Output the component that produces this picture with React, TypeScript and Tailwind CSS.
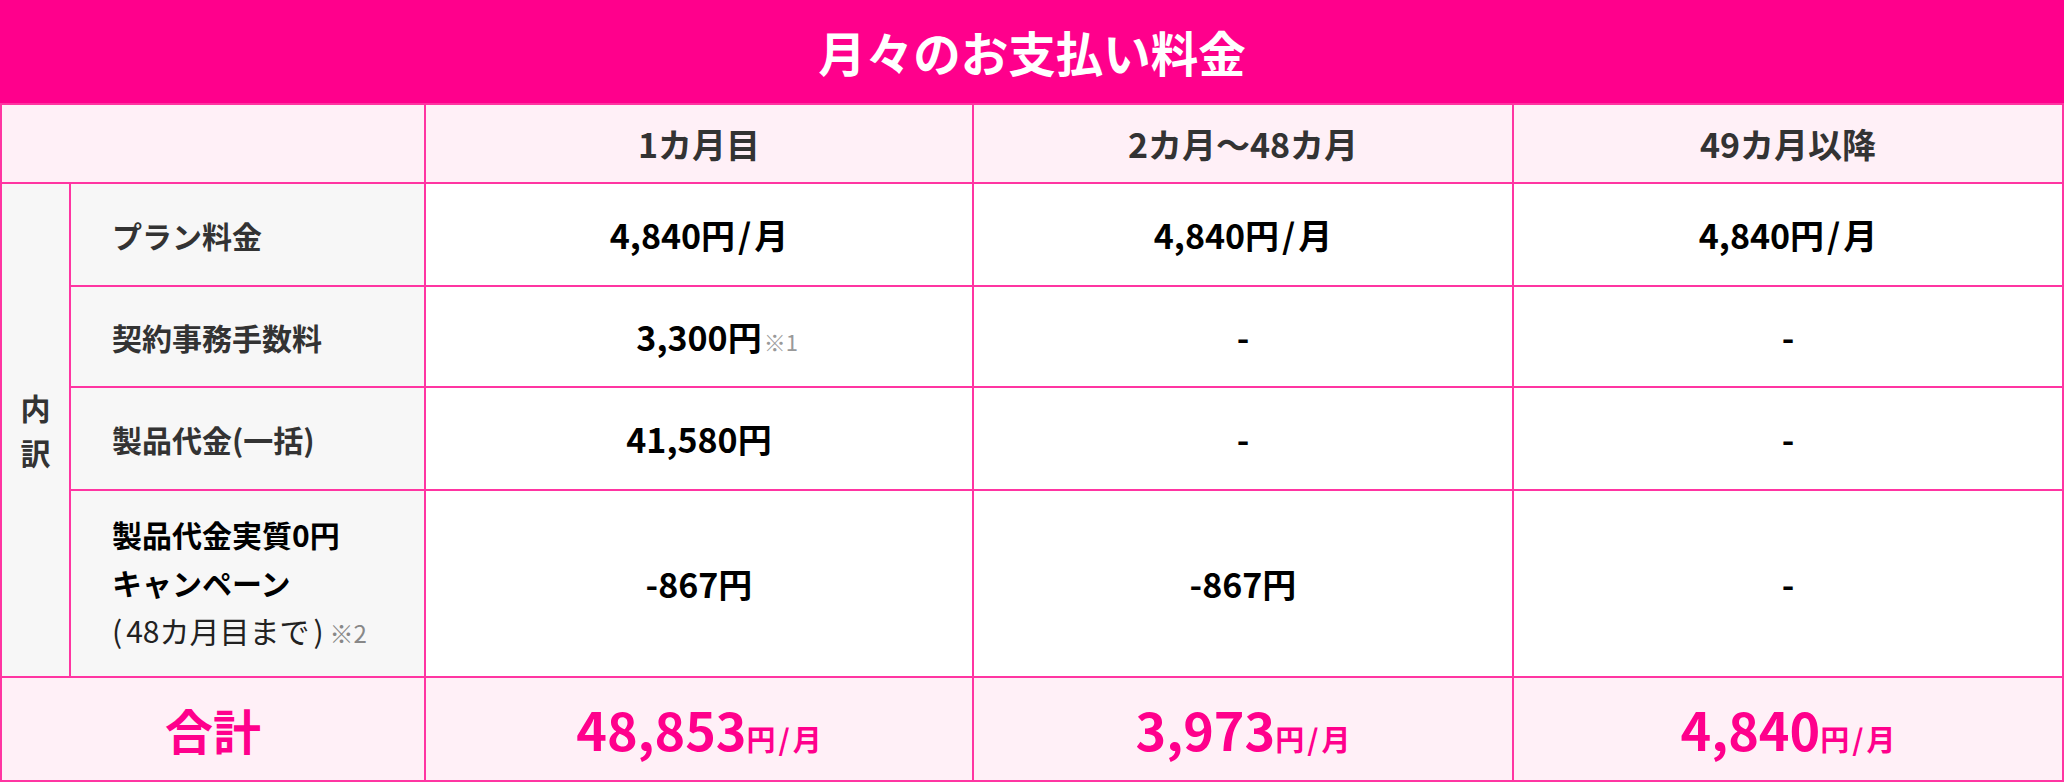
const font = "font-['Noto_Sans_CJK_JP','Noto_Sans',sans-serif]";

export default function App() {
  return (
    <div className={`w-[2064px] bg-white ${font}`}>
      <div className="flex h-[103px] items-center justify-center bg-[#ff008c]">
        <h1 className="text-[47.5px] font-bold leading-none text-white">月々のお支払い料金</h1>
      </div>

      <div className="grid grid-cols-[67px_353px_546px_538px_548px] grid-rows-[77px_101px_99px_101px_185px_102px] gap-[2px] bg-[#ff35a2] p-[2px]">
        {/* 見出し行 */}
        <div className="col-span-2 bg-[#fff0f7]" />
        <HeadCell>1カ月目</HeadCell>
        <HeadCell>2カ月〜48カ月</HeadCell>
        <HeadCell>49カ月以降</HeadCell>

        {/* 内訳 */}
        <div className="row-span-4 flex items-center justify-center bg-[#f7f7f7]">
          <div className="text-[30px] font-bold leading-[45px] text-[#333]">
            内<br />訳
          </div>
        </div>

        <Label>プラン料金</Label>
        <Value text="4,840円/月" />
        <Value text="4,840円/月" />
        <Value text="4,840円/月" />

        <Label>契約事務手数料</Label>
        <Value text="3,300円" note="※1" />
        <Value text="-" />
        <Value text="-" />

        <Label>製品代金(一括)</Label>
        <Value text="41,580円" />
        <Value text="-" />
        <Value text="-" />

        <div className="flex flex-col justify-center bg-[#f7f7f7] pl-[41px] text-[30px] leading-[48px]">
          <div className="font-bold text-black">製品代金実質0円</div>
          <div className="font-bold text-black">キャンペーン</div>
          <div className="text-[#222]">
            <span className="mr-[4px]">(</span>48カ月目まで<span className="ml-[4px]">)</span>
            <span className="ml-[6px] text-[24px] text-[#888]">※2</span>
          </div>
        </div>
        <Value text="-867円" />
        <Value text="-867円" />
        <Value text="-" />

        {/* 合計 */}
        <div className="col-span-2 flex items-center justify-center bg-[#fff0f7]">
          <span className="text-[48px] font-bold leading-none text-[#ff008c]">合計</span>
        </div>
        <Total amount="48,853" />
        <Total amount="3,973" />
        <Total amount="4,840" />
      </div>
    </div>
  );
}

function HeadCell({ children }: { children: React.ReactNode }) {
  return (
    <div className="flex items-center justify-center bg-[#fff0f7]">
      <span className="text-[34px] font-bold leading-none text-[#333]">{children}</span>
    </div>
  );
}

function Label({ children }: { children: React.ReactNode }) {
  return (
    <div className="flex items-center bg-[#f7f7f7] pl-[41px]">
      <span className="text-[30px] font-bold leading-none text-[#333]">{children}</span>
    </div>
  );
}

function Value({ text, note }: { text: string; note?: string }) {
  const [main, per] = text.split('/');
  return (
    <div className="flex items-center justify-center bg-white">
      <span className="relative text-[34px] font-bold leading-none text-black">
        {main}
        {per && (
          <>
            <span className="mx-[3px]">/</span>
            {per}
          </>
        )}
        {note && (
          <span className="absolute bottom-[2px] left-full ml-[2px] whitespace-nowrap text-[22px] font-normal text-[#999]">
            {note}
          </span>
        )}
      </span>
    </div>
  );
}

function Total({ amount }: { amount: string }) {
  return (
    <div className="flex items-center justify-center bg-[#fff0f7]">
      <span className="font-bold leading-none text-[#ff008c]">
        <span className="text-[52px]">{amount}</span>
        <span className="text-[29px]">
          円<span className="mx-[3px]">/</span>月
        </span>
      </span>
    </div>
  );
}
